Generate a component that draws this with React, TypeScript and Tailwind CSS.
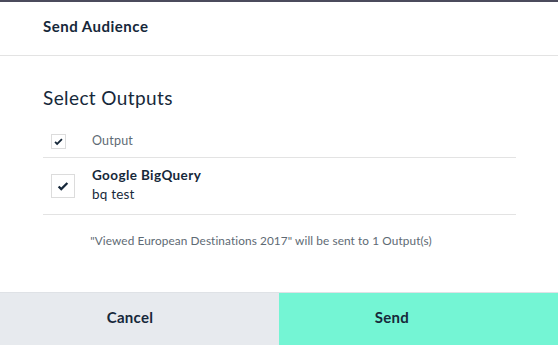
import React from "react";

function Check({ size }: { size: number }) {
  return (
    <svg width={size} height={size} viewBox="0 0 16 16" fill="none">
      <path d="M3 8.5l3 3 7-7" stroke="#16283a" strokeWidth="2.6" strokeLinecap="butt" strokeLinejoin="miter" />
    </svg>
  );
}

export default function App() {
  return (
    <div className="w-[558px] h-[345px] bg-white flex flex-col overflow-hidden font-['Lato','Liberation_Sans',sans-serif] text-[#16283a]">
      {/* header */}
      <div className="border-t-2 border-[#4b4b5c] h-[56px] border-b border-b-[#e3e3e3] flex items-center px-[43px]">
        <span className="text-[15px] font-bold tracking-[0.5px] -mt-[4px]">Send Audience</span>
      </div>

      {/* body */}
      <div className="flex-1 flex flex-col pl-[43px] pr-[42px]">
        <h2 className="text-[19px] mt-[30px] leading-[24px] tracking-[0.4px]">Select Outputs</h2>

        <div className="mt-[15px] flex flex-col">
          <div className="h-[33px] flex items-center border-b border-[#e3e3e3]">
            <div className="ml-[8px] w-[15px] h-[15px] border border-[#dcdcdc] flex items-center justify-center">
              <Check size={11} />
            </div>
            <span className="ml-[26px] text-[12.5px] tracking-[0.2px] text-[#5e6a74]">Output</span>
          </div>
          <div className="h-[57px] flex items-center border-b border-[#e3e3e3]">
            <div className="ml-[8px] w-[24px] h-[24px] border border-[#dcdcdc] flex items-center justify-center">
              <Check size={14} />
            </div>
            <div className="ml-[17px] flex flex-col -mt-[3px]">
              <span className="text-[13.5px] font-bold leading-[18px] tracking-[0.4px]">Google BigQuery</span>
              <span className="text-[13.5px] leading-[20px] tracking-[0.2px]">bq test</span>
            </div>
          </div>
        </div>

        <p className="mt-[17px] text-[11.8px] tracking-[0.1px] text-[#5e6a74] text-center pr-[37px]">
          "Viewed European Destinations 2017" will be sent to 1 Output(s)
        </p>
      </div>

      {/* footer buttons */}
      <div className="h-[53px] flex border-t border-[#dfe2e6]">
        <button className="w-[279px] bg-[#e7eaee] flex items-center justify-center pr-[19px] pb-[4px] text-[15px] tracking-[0.3px] font-bold">
          Cancel
        </button>
        <button className="flex-1 bg-[#74f5d4] flex items-center justify-center pr-[53px] pb-[4px] text-[15px] tracking-[0.3px] font-bold">
          Send
        </button>
      </div>
    </div>
  );
}
